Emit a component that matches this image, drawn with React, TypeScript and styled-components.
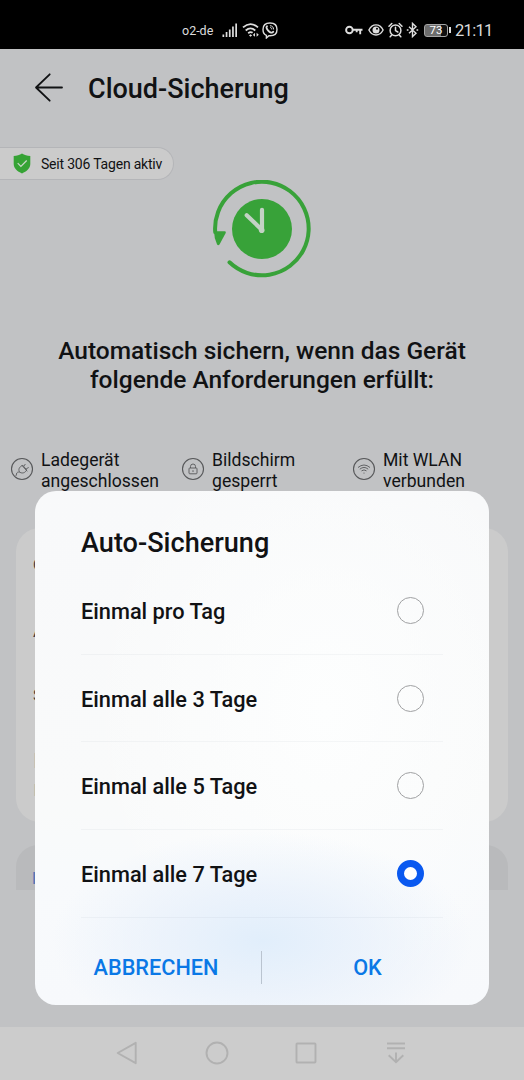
import React from "react";
import styled, { createGlobalStyle } from "styled-components";

const Global = createGlobalStyle`
  * { box-sizing: border-box; }
  body { margin: 0; font-family: Roboto, "Liberation Sans", sans-serif; }
  svg { display: block; flex: none; }
`;

const Screen = styled.div`
  position: relative;
  width: 524px;
  height: 1080px;
  overflow: hidden;
  display: flex;
  flex-direction: column;
  background: #c1c2c4;
  color: #111214;
`;

const StatusBar = styled.div`
  height: 49px;
  flex: none;
  padding: 11px 0 0 182px;
  background: #000;
  color: #dcdcdc;
  display: flex;
  align-items: flex-start;
`;

const StatusGroup = styled.div<{ $left?: number }>`
  display: flex;
  align-items: center;
  margin-left: ${(p) => p.$left ?? 0}px;
  height: 38px;
`;

const Carrier = styled.span`
  width: 40px;
  padding-top: 1px;
  font-size: 12.5px;
  line-height: 38px;
  white-space: nowrap;
`;

const Clock = styled.span`
  margin-left: 4px;
  padding-top: 2px;
  font-size: 16.5px;
  line-height: 38px;
  letter-spacing: -0.7px;
`;

const AppBar = styled.header`
  display: flex;
  align-items: center;
  height: 78px;
  padding-left: 34px;
  flex: none;
`;

const PageTitle = styled.h1`
  margin: 1px 0 0 24px;
  font-size: 27px;
  font-weight: 500;
  line-height: 32px;
  white-space: nowrap;
`;

const ActiveBadge = styled.div`
  display: flex;
  align-items: center;
  width: 174px;
  height: 33px;
  margin-top: 20px;
  padding-left: 13px;
  flex: none;
  border: 1px solid #b4b5b8;
  border-left: 0;
  border-radius: 0 17px 17px 0;
  background: #cbcbcb;
  font-size: 14px;
  letter-spacing: -0.2px;
  white-space: nowrap;
`;

const BadgeText = styled.span`
  margin-left: 10px;
`;

const HeroIcon = styled.div`
  display: flex;
  justify-content: center;
  height: 98px;
  padding-right: 1px;
  flex: none;
`;

const Requirement = styled.h2`
  margin: 59px 0 0;
  height: 58px;
  flex: none;
  font-size: 24.5px;
  font-weight: 500;
  line-height: 28.6px;
  text-align: center;
`;

const Conditions = styled.div`
  display: grid;
  grid-template-columns: 171px 171px 171px;
  margin-top: 55px;
  padding-left: 10px;
  height: 42px;
  flex: none;
`;

const Condition = styled.div`
  display: flex;
  align-items: center;
  gap: 7px;
  font-size: 17.6px;
  line-height: 21px;
  white-space: nowrap;
`;

const SettingsCard = styled.section`
  margin: 36px 16px 0;
  height: 294px;
  padding: 1px 17px 0;
  flex: none;
  border-radius: 24px;
  background: #cbcbcb;
`;

const SettingsLine = styled.div<{ $height: number; $size: number; $color?: string }>`
  height: ${(p) => p.$height}px;
  line-height: ${(p) => p.$height}px;
  font-size: ${(p) => p.$size}px;
  color: ${(p) => p.$color ?? "#3c3d3f"};
`;

const ActionCard = styled.section`
  margin: 23px 16px 0;
  height: 45px;
  padding: 23px 16px 0;
  flex: none;
  border-radius: 22px 22px 0 0;
  background: #b9babc;
  color: #5577b5;
  font-size: 16px;
  font-weight: 500;
  line-height: 22px;
`;

const NavBar = styled.nav`
  display: flex;
  justify-content: space-between;
  align-items: center;
  height: 53px;
  margin-top: auto;
  padding: 0 116px 1px 115px;
  flex: none;
  background: #ccc;
  color: #b1b1b1;
`;

const Dialog = styled.div`
  position: absolute;
  left: 35px;
  top: 491px;
  width: 454px;
  height: 514px;
  padding: 0 46px;
  border-radius: 21px;
  background:
    radial-gradient(ellipse 210px 110px at 227px 450px, #e1eefb 0%, rgba(231, 240, 251, 0.75) 45%, rgba(246, 248, 252, 0) 100%),
    radial-gradient(ellipse 240px 300px at 290px 220px, #fdfefe 0%, rgba(252, 253, 254, 0) 100%),
    linear-gradient(180deg, #f8f9fa 0%, #f9fafa 60%, #f8fafc 75%, #f7f9fc 100%);
`;

const DialogTitle = styled.h2`
  height: 76px;
  margin: 0;
  padding-top: 36px;
  font-size: 27.1px;
  font-weight: 500;
  line-height: 32px;
  white-space: nowrap;
`;

const Option = styled.div`
  display: flex;
  align-items: center;
  justify-content: space-between;
  height: 87.7px;
  padding-right: 19px;
  border-bottom: 1px solid rgba(70, 90, 110, 0.05);
  font-size: 21.75px;
  font-weight: 500;
`;

const OptionLabel = styled.span`
  padding-top: 2px;
`;

const Radio = styled.span<{ $checked: boolean }>`
  width: 27px;
  height: 27px;
  border-radius: 50%;
  border: ${(p) => (p.$checked ? "7px solid #0a59f0" : "1.5px solid #a0a1a3")};
  background: ${(p) => (p.$checked ? "#fff" : "transparent")};
`;

const DialogActions = styled.div`
  display: flex;
  align-items: center;
  height: 100px;
`;

const TextButton = styled.button<{ $width: number }>`
  width: ${(p) => p.$width}px;
  padding: 0;
  border: 0;
  background: none;
  color: #0a78e6;
  font: 500 21.7px/32px Roboto, sans-serif;
`;

const Separator = styled.span`
  width: 1px;
  height: 33px;
  background: #bac4d0;
`;

const SignalIcon = () => (
  <svg width="16" height="16" viewBox="0 0 16 16" fill="#dedede">
    <path d="M.5 12.5h1.7V15H.5zM3.7 10h1.7v5H3.7zM6.9 7.5h1.7V15H6.9zM10.1 4.5h1.7V15h-1.7zM13.3 1.5H15V15h-1.7z" />
  </svg>
);

const StatusWifi = () => (
  <svg width="18" height="16" viewBox="0 0 18 16" fill="none" stroke="#dedede" strokeWidth="1.8">
    <path d="M1 5.4Q8.5-1.2 16 5.4M3.7 8.5Q8.5 4.2 13.3 8.5M6.2 11.2Q8.5 9.3 10.6 10.8" />
    <path d="M8.5 12.2l1.6 1.2-1.6 1.4-1.5-1.4zM13 10.8v4L10.8 13zM14.6 10.8v4l2.2-2z" fill="#dedede" stroke="none" />
  </svg>
);

const ViberIcon = () => (
  <svg width="16" height="17" viewBox="0 0 16 17" fill="none" stroke="#dedede" strokeWidth="1.4" strokeLinecap="round">
    <path d="M8 1C3 1 1 3 1 7.5c0 3.3 1 5 3.4 5.8V16l2.5-2.2H8c5 0 7-1.8 7-6.3S13 1 8 1Z" />
    <path d="M5 4.2c-1.5 1 .4 3.9 1.8 5.1 1.1 1 3.3 2.2 4.4.5" strokeWidth="1.9" />
    <path d="M8.3 3.7c2 .1 3.2 1.4 3.3 3.4M8.5 5.6c.9.1 1.3.6 1.3 1.4" strokeWidth="1" />
  </svg>
);

const KeyIcon = () => (
  <svg width="18" height="12" viewBox="0 0 18 12" fill="none" stroke="#dedede" strokeWidth="1.9">
    <circle cx="4.4" cy="6" r="3.3" />
    <path d="M7.8 5.7h9.7M15.2 5.7v4.6M11.7 5.7v2.5" />
  </svg>
);

const EyeIcon = () => (
  <svg width="16" height="14" viewBox="0 0 16 14" fill="none" stroke="#dedede" strokeWidth="1.4">
    <path d="M.9 7C4.3.2 11.7.2 15.1 7 11.7 13.6 4.3 13.6.9 7Z" />
    <circle cx="8" cy="7" r="3.5" fill="#dedede" stroke="none" />
    <circle cx="9" cy="5.8" r="1" fill="#000" stroke="none" />
  </svg>
);

const AlarmIcon = () => (
  <svg width="15" height="16" viewBox="0 0 15 16" fill="none" stroke="#dedede" strokeWidth="1.5" strokeLinecap="round">
    <circle cx="7.5" cy="8.4" r="5.4" />
    <path d="M1 4.2 3.8 1.5M14 4.2l-2.8-2.7M7.5 5.3v3.3L9.8 10M3.5 13.2l-1.3 1.6M11.5 13.2l1.3 1.6" />
  </svg>
);

const BluetoothIcon = () => (
  <svg width="13" height="16" viewBox="0 0 13 16" fill="none" stroke="#dedede" strokeWidth="1.4">
    <path d="m3 4.7 7 6.5L6.5 14.6V1.4L10 4.8l-7 6.5" />
    <path d="M.8 8h1.7M10.5 8h1.7" strokeWidth="1.6" />
  </svg>
);

const Battery = styled.span`
  display: flex;
  align-items: center;
  justify-content: center;
  width: 24px;
  height: 13px;
  margin-left: 5px;
  border: 1px solid #a5a5a5;
  border-radius: 3px;
  background: linear-gradient(90deg, #6d6d6d 72%, #111 72%);
  color: #fff;
  font-size: 11.5px;
  line-height: 11px;
`;

const BatteryTip = styled.span`
  width: 2px;
  height: 6px;
  margin-left: 1px;
  background: #dedede;
`;

const Gap = styled.span<{ $w: number }>`
  width: ${(p) => p.$w}px;
`;

const BackArrow = () => (
  <svg width="30" height="30" viewBox="0 0 30 30" fill="none" stroke="#111214" strokeWidth="1.8" strokeLinecap="round" strokeLinejoin="round">
    <path d="M15.7 1.3 2 14.5l13.7 13.2M2.3 14.5H28" />
  </svg>
);

const ShieldIcon = () => (
  <svg width="18" height="21" viewBox="0 0 18 21">
    <path d="M9 .5c2.4 1.6 5.2 2.2 8.3 2.4v8.2c0 4.2-3.5 7.5-8.3 9.4C4.2 18.6.7 15.300.7 11.100V2.900C3.800 2.700 6.600 2.100 9 .5Z" fill="#36a335" />
    <path d="m4.700 10.200 3.200 3.200 5.800-5.900" fill="none" stroke="#cbd8cb" strokeWidth="1.2" />
  </svg>
);

const BackupClock = () => (
  <svg width="98" height="98" viewBox="0 0 98 98" fill="none">
    <path d="M2.200 52A46.800 46.800 0 1 1 16.500 82.300" stroke="#38a239" strokeWidth="4" strokeLinecap="round" />
    <path d="M1 51.300h10.700q1.800.2 1 1.800L6.500 64.500q-1.500 1.600-2.500-.3Q1 58 1 51.300Z" fill="#38a239" />
    <circle cx="49" cy="49" r="30" fill="#38a239" />
    <path d="M33.700 35.200 49 50V29.800" stroke="#c3d2c4" strokeWidth="4.2" strokeLinecap="round" strokeLinejoin="round" />
    <circle cx="48.700" cy="50.300" r="2.800" fill="#c3d2c4" />
  </svg>
);

const ConditionSvg = styled.svg`
  margin-top: -4px;
`;

const ConditionIcon = ({ children }: { children: React.ReactNode }) => (
  <ConditionSvg width="24" height="24" viewBox="0 0 24 24" fill="none" stroke="#57585a" strokeWidth="0.9">
    <circle cx="12" cy="12" r="10.5" strokeWidth="1.1" />
    {children}
  </ConditionSvg>
);

const options = ["Einmal pro Tag", "Einmal alle 3 Tage", "Einmal alle 5 Tage", "Einmal alle 7 Tage"];

export default function App() {
  const [selected, setSelected] = React.useState(3);
  return (
    <>
      <Global />
      <Screen>
        <StatusBar>
          <StatusGroup>
            <Carrier>o2-de</Carrier>
            <SignalIcon />
            <Gap $w={4} />
            <StatusWifi />
            <Gap $w={2} />
            <ViberIcon />
          </StatusGroup>
          <StatusGroup $left={67}>
            <KeyIcon />
            <Gap $w={5} />
            <EyeIcon />
            <Gap $w={4} />
            <AlarmIcon />
            <Gap $w={3} />
            <BluetoothIcon />
            <Battery>73</Battery>
            <BatteryTip />
            <Clock>21:11</Clock>
          </StatusGroup>
        </StatusBar>

        <AppBar>
          <BackArrow />
          <PageTitle>Cloud-Sicherung</PageTitle>
        </AppBar>

        <ActiveBadge>
          <ShieldIcon />
          <BadgeText>Seit 306 Tagen aktiv</BadgeText>
        </ActiveBadge>

        <HeroIcon>
          <BackupClock />
        </HeroIcon>

        <Requirement>
          Automatisch sichern, wenn das Gerät
          <br />
          folgende Anforderungen erfüllt:
        </Requirement>

        <Conditions>
          <Condition>
            <ConditionIcon>
              <path d="m12.800 8.300 3.900 4.700c-1.500 2.800-4.200 3.700-6.600 2.400-2.300-2.200-1.200-5.600 2.700-7.100ZM11.800 8.300l5.500 6M13.700 9.300l1.700-2.300M16.200 11.800l2.500-1.300M9.800 15.200c-1.800-.5-3.300.3-3.300 1.800 0 1-.3 1.600-1 2" />
            </ConditionIcon>
            <span>Ladegerät<br />angeschlossen</span>
          </Condition>
          <Condition>
            <ConditionIcon>
              <rect x="8" y="11" width="8" height="5.8" rx="0.8" />
              <path d="M9.500 11V9.500a2.500 2.500 0 0 1 5 0V11M12 13.200v1.800" />
            </ConditionIcon>
            <span>Bildschirm<br />gesperrt</span>
          </Condition>
          <Condition>
            <ConditionIcon>
              <path d="M6 10.500q6-5 12 0M7.800 12.200q4.200-3.500 8.400 0M9.500 13.900q2.500-2 5 0" />
              <circle cx="12" cy="16" r="0.6" fill="#57585a" stroke="none" />
            </ConditionIcon>
            <span>Mit WLAN<br />verbunden</span>
          </Condition>
        </Conditions>

        <SettingsCard>
          <SettingsLine $height={73} $size={15}>C</SettingsLine>
          <SettingsLine $height={58} $size={17}>A</SettingsLine>
          <SettingsLine $height={72} $size={16}>S</SettingsLine>
          <SettingsLine $height={59} $size={20} $color="#a7aba7">I</SettingsLine>
          <SettingsLine $height={0} $size={16} $color="#b0b9ac">I</SettingsLine>
        </SettingsCard>
        <ActionCard>I</ActionCard>

        <NavBar>
          <svg width="24" height="24" viewBox="0 0 24 24" fill="none" stroke="currentColor" strokeWidth="1.9" strokeLinejoin="round">
            <path d="M20.700 1.800v20.400L2.700 12Z" />
          </svg>
          <svg width="24" height="24" viewBox="0 0 24 24" fill="none" stroke="currentColor" strokeWidth="1.9">
            <circle cx="12" cy="12" r="10.5" />
          </svg>
          <svg width="24" height="24" viewBox="0 0 24 24" fill="none" stroke="currentColor" strokeWidth="1.9">
            <rect x="2.5" y="2.5" width="19" height="19" rx="0.8" />
          </svg>
          <svg width="24" height="24" viewBox="0 0 24 24" fill="none" stroke="currentColor" strokeWidth="1.9">
            <path d="M3 2.500h18M3 7.200h18M12 11.500v10M4.700 14.200l7.300 7 7.300-7" />
          </svg>
        </NavBar>

        <Dialog role="dialog">
          <DialogTitle>Auto-Sicherung</DialogTitle>
          {options.map((label, i) => (
            <Option key={label} onClick={() => setSelected(i)}>
              <OptionLabel>{label}</OptionLabel>
              <Radio $checked={i === selected} />
            </Option>
          ))}
          <DialogActions>
            <TextButton $width={150}>ABBRECHEN</TextButton>
            <Gap $w={30} />
            <Separator />
            <Gap $w={30} />
            <TextButton $width={151}>OK</TextButton>
          </DialogActions>
        </Dialog>
      </Screen>
    </>
  );
}
